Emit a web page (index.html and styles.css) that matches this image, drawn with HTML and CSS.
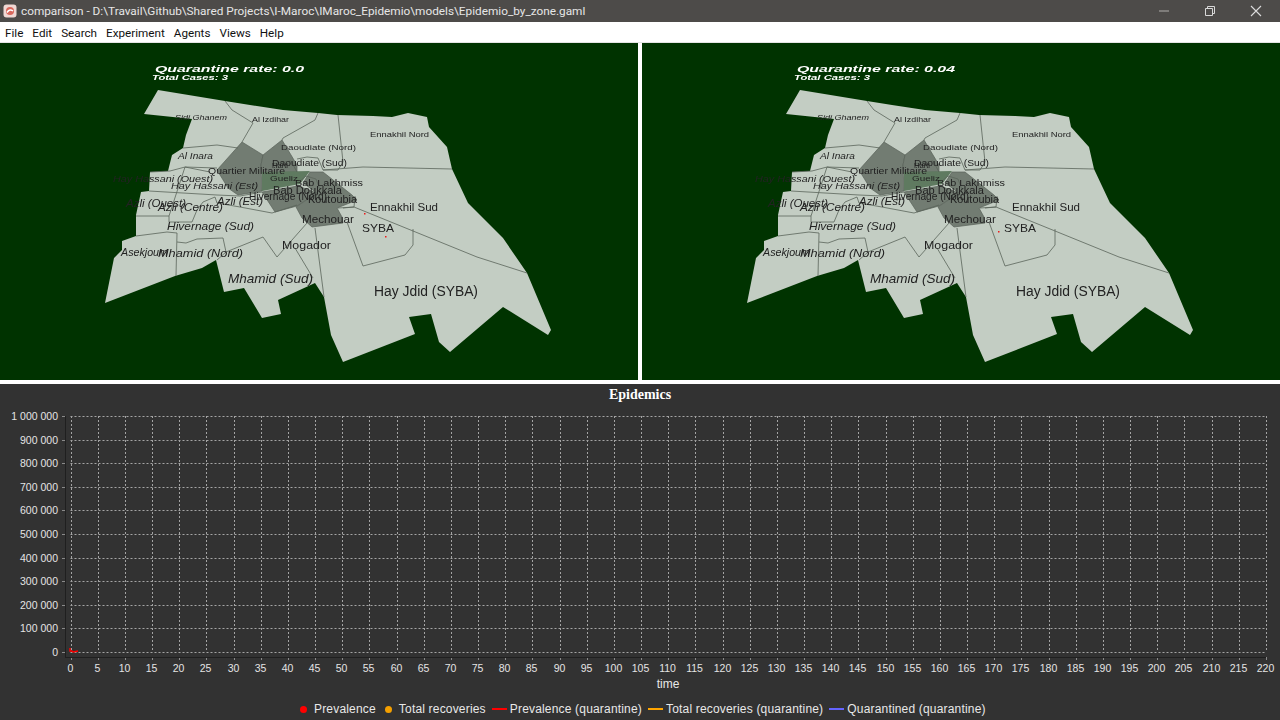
FILE: index.html
```html
<!DOCTYPE html>
<html lang="en">
<head>
    <meta charset="UTF-8">
    <title>comparison - Epidemio_by_zone.gaml</title>
    <link rel="stylesheet" href="styles.css">
</head>
<body>
    <div class="titlebar">
        <svg class="app-icon" width="14" height="14" viewBox="0 0 14 14">
            <rect x="0.5" y="0.5" width="13" height="13" rx="3" fill="#f0d8d4"/>
            <circle cx="7" cy="7" r="4" fill="#d9675c"/>
            <path d="M4 8.5c2-3 4-3 6-1.500" stroke="#fff" stroke-width="1.500" fill="none"/>
        </svg>
        <span class="window-title">comparison - D:\Travail\Github\Shared Projects\I-Maroc\IMaroc_Epidemio\models\Epidemio_by_zone.gaml</span>
        <div class="window-buttons">
            <svg width="12" height="12" viewBox="0 0 12 12"><path d="M1 6h10" stroke="#8f8d8b" stroke-width="1.500"/></svg>
            <svg width="12" height="12" viewBox="0 0 12 12"><path d="M1.500 3.500h7v7h-7zM3.500 3V1.500h7v7H9" stroke="#d8d8d8" fill="none"/></svg>
            <svg width="12" height="12" viewBox="0 0 12 12"><path d="M1 1l10 10M11 1L1 11" stroke="#dcdcdc" stroke-width="1.100"/></svg>
        </div>
    </div>
    <nav class="menubar">
        <span>File</span>
        <span>Edit</span>
        <span>Search</span>
        <span>Experiment</span>
        <span>Agents</span>
        <span>Views</span>
        <span>Help</span>
    </nav>
    <div class="maps">
        <div class="map-panel" id="map-a"></div>
        <div class="map-panel" id="map-b"></div>
    </div>
    <div class="chart">
        <h2 class="chart-title">Epidemics</h2>
        <div id="plot"></div>
        <div class="legend">
            <div class="legend-item"><i class="dot dot-red"></i>Prevalence</div>
            <div class="legend-item"><i class="dot dot-orange"></i>Total recoveries</div>
            <div class="legend-item line-item"><i class="line line-red"></i>Prevalence (quarantine)</div>
            <div class="legend-item line-item"><i class="line line-orange"></i>Total recoveries (quarantine)</div>
            <div class="legend-item line-item"><i class="line line-blue"></i>Quarantined (quarantine)</div>
        </div>
    </div>
    <script src="script.js"></script>
</body>
</html>
```

FILE: styles.css
```css
html, body {
    margin: 0;
    height: 720px;
    overflow: hidden;
    background-color: #fff;
}
body {
    display: flex;
    flex-direction: column;
    font-family: "Liberation Sans", Arial, sans-serif;
}
.titlebar {
    height: 22px;
    display: flex;
    align-items: center;
    background-color: #4d4b49;
    color: #e6e6e6;
    font-family: Roboto, sans-serif;
    font-size: 11.800px;
}
.app-icon {
    margin: 0 4px 0 3px;
}
.window-buttons {
    margin-left: auto;
    display: flex;
    gap: 34px;
    padding-right: 18px;
}
.menubar {
    box-sizing: border-box;
    height: 21px;
    display: flex;
    align-items: center;
    gap: 9px;
    padding: 2px 0 0 5px;
    background-color: #fff;
    border-bottom: 1px solid #e4e4e4;
    color: #111;
    font-family: Roboto, sans-serif;
    font-size: 11.700px;
}
.maps {
    height: 337px;
    display: flex;
    gap: 4px;
    margin-bottom: 4px;
}
.map-panel {
    width: 638px;
    overflow: hidden;
    background-color: #003300;
}
.map-panel svg {
    filter: blur(0.35px);
}
.map-panel svg, #plot svg {
    display: block;
}
.zone {
    fill: #c3cdc3;
}
.zone-dark {
    fill: #727c72;
    stroke: #596259;
    stroke-width: 0.7;
}
.zone-green {
    fill: #5f7a60;
}
.border {
    fill: none;
    stroke: #5b645b;
    stroke-width: 0.8;
}
.label {
    fill: #222;
}
.label-italic {
    font-style: italic;
}
.heading {
    fill: #fff;
    font-weight: bold;
    font-style: italic;
}
.case {
    fill: #f01818;
}
.chart {
    flex: 1;
    display: flex;
    flex-direction: column;
    background-color: #323232;
    color: #e8e8e8;
}
.chart-title {
    margin: 0;
    height: 19px;
    line-height: 22px;
    text-align: center;
    color: #fff;
    font-family: "Liberation Serif", serif;
    font-size: 14px;
    font-weight: bold;
}
.grid {
    stroke: #a4a4a4;
    stroke-width: 1;
    stroke-dasharray: 2 2;
}
.axis {
    stroke: #1f1f1f;
    stroke-width: 1;
}
.tick {
    stroke: #8a8a8a;
    stroke-width: 1;
}
.tick-label {
    fill: #e4e4e4;
    font-size: 10.500px;
}
.axis-label {
    fill: #e8e8e8;
    font-size: 12px;
}
.trace {
    stroke: #f00;
    stroke-width: 1.500;
    fill: none;
}
.legend {
    flex: 1;
    display: flex;
    align-items: center;
    gap: 9px;
    padding-left: 300px;
    font-size: 12px;
    letter-spacing: 0.18px;
}
.legend-item {
    display: flex;
    align-items: center;
    gap: 7px;
}
.line-item {
    gap: 3px;
    margin-left: -3px;
}
.dot {
    width: 7px;
    height: 7px;
    border-radius: 50%;
}
.dot-red {
    background-color: #f00;
}
.dot-orange {
    background-color: #f5a000;
}
.line {
    width: 15px;
    height: 2px;
}
.line-red {
    background-color: #f00;
}
.line-orange {
    background-color: #ffa500;
}
.line-blue {
    background-color: #6464ff;
}
```

FILE: script.js
```js
const SVG_NS = 'http://www.w3.org/2000/svg';

const outline = '158,90 144,114 192,119 186,135 183,148 172,155 168,171 150,172 149,191 141,192 136,215 136,236 122,241 122,250 114,258 105,303 175,276 202,268 216,260 224,292 244,288 262,318 281,314 278,300 315,283 324,297 331,335 343,362 415,334 409,317 431,314 439,342 450,352 503,307 548,335 551,330 527,273 503,238 468,203 452,169 447,147 429,127 427,117 408,113 392,117 373,116 337,115 318,113 283,110 250,105 225,101';

const darkZones = [
    '242,142 263,155 261,165 262,191 238,195 228,188 217,170',
    '282,140 297,165 297,172 262,173 261,165 263,155',
    '262,192 298,186 317,193 297,206 275,212',
    '310,172 323,172 352,195 357,200 337,208 342,217 343,223 312,227 302,218 296,207 317,193 303,183'
];
const greenZone = '262,172 310,171 300,184 262,191';

const borders = [
    '225,101 232,110 253,123 242,142',
    '318,113 315,120 283,138 282,140',
    '183,148 217,145 238,148',
    '150,172 170,171 185,167 210,172',
    '185,167 217,168',
    '149,191 217,195 240,196 262,192',
    '215,197 217,203 240,207 272,213 297,205',
    '185,167 169,216 169,222 192,222 197,210 203,202 215,197',
    '136,216 169,216',
    '136,236 167,232 177,233 176,276',
    '177,242 186,243 197,239 223,238 226,252 217,260',
    '226,252 263,237 277,257 307,223',
    '295,248 313,278',
    '315,228 324,297',
    '338,115 343,162 338,170 323,170 318,158 307,157 297,159',
    '323,170 363,167 452,169',
    '354,207 477,257 527,273',
    '338,208 354,207',
    '347,222 363,266 405,255 413,245 413,229',
    '343,208 354,207 355,196',
    '300,181 306,176 316,179 320,190',
    '272,164 291,161 297,172'
];

// text, left, right, vertical centre, font size, italic
const labels = [
    ['Sidi Ghanem', 175, 227, 118, 6.5, 1],
    ['Al Izdihar', 252, 289, 119.5, 6.5, 0],
    ['Ennakhil Nord', 370, 429, 134, 7, 0],
    ['Daoudiate (Nord)', 281, 356, 147, 7.5, 0],
    ['Al Inara', 178, 213, 156, 8.5, 1],
    ['Daoudiate (Sud)', 272, 347, 163, 8.5, 0],
    ['Harti', 272, 288, 165, 7.5, 0],
    ['Quartier Militaire', 208, 285, 170.5, 9, 0],
    ['Hay Hassani (Ouest)', 113, 213, 179, 9, 1],
    ['Gueliz', 270, 298, 178, 8, 0],
    ['Bab Lakhmiss', 295, 363, 183, 9.5, 0],
    ['Hay Hassani (Est)', 171, 258, 186, 9.5, 1],
    ['Bab Doukkala', 273, 342, 190, 10, 0],
    ['Hivernage (Nord)', 249, 327, 196, 10.5, 0],
    ['Koutoubia', 308, 357, 199, 10, 0],
    ['Azli (Est)', 217, 263, 201, 10, 1],
    ['Azli (Ouest)', 126, 186, 203.5, 10, 1],
    ['Azli (Centre)', 158, 223, 207.5, 10.5, 1],
    ['Ennakhil Sud', 370, 438, 207.5, 10, 0],
    ['Mechouar', 302, 354, 219, 10.5, 0],
    ['Hivernage (Sud)', 167, 254, 226, 10.5, 1],
    ['SYBA', 362, 394, 228, 10.5, 0],
    ['Mogador', 282, 331, 245, 11.5, 0],
    ['Asekjoum', 121, 168, 252, 11.5, 1],
    ['Mhamid (Nord)', 158, 243, 252.5, 11.5, 1],
    ['Mhamid (Sud)', 228, 313, 278.5, 13, 1],
    ['Hay Jdid (SYBA)', 374, 478, 291, 14, 0]
];

const simulations = [
    { id: 'map-a', rate: '0.0', rateWidth: 149, cases: [[385, 236], [364, 213]] },
    { id: 'map-b', rate: '0.04', rateWidth: 158, cases: [[356, 231]] }
];

function el(name, attrs, text) {
    const node = document.createElementNS(SVG_NS, name);
    for (const key in attrs) {
        node.setAttribute(key, attrs[key]);
    }
    if (text !== undefined) {
        node.textContent = text;
    }
    return node;
}

function fittedText(svg, text, left, right, centre, size, cls) {
    svg.appendChild(el('text', {
        x: left,
        y: centre + size * 0.36,
        'font-size': size,
        textLength: right - left,
        lengthAdjust: 'spacingAndGlyphs',
        class: cls
    }, text));
}

function drawMap(sim) {
    const svg = el('svg', { width: 638, height: 337, viewBox: '0 43 638 337' });
    svg.appendChild(el('polygon', { points: outline, class: 'zone' }));
    darkZones.forEach(points => svg.appendChild(el('polygon', { points, class: 'zone-dark' })));
    svg.appendChild(el('polygon', { points: greenZone, class: 'zone-green' }));
    borders.forEach(points => svg.appendChild(el('polyline', { points, class: 'border' })));
    labels.forEach(l => {
        fittedText(svg, l[0], l[1], l[2], l[3], l[4], l[5] ? 'label label-italic' : 'label');
    });
    sim.cases.forEach(c => {
        svg.appendChild(el('rect', { x: c[0], y: c[1], width: 1.5, height: 1.5, class: 'case' }));
    });
    fittedText(svg, 'Quarantine rate: ' + sim.rate, 155, 155 + sim.rateWidth, 69, 8.5, 'heading');
    fittedText(svg, 'Total Cases: 3', 152, 228, 77.5, 7, 'heading');
    document.getElementById(sim.id).appendChild(svg);
}

function drawPlot() {
    const svg = el('svg', { width: 1280, height: 295, viewBox: '0 403 1280 295' });
    const x0 = 70.5, xStep = 27.17, yTop = 416, yStep = 23.6;

    for (let i = 0; i <= 10; i++) {
        const y = Math.round(yTop + i * yStep) + 0.5;
        svg.appendChild(el('line', { x1: x0, x2: 1266, y1: y, y2: y, class: 'grid' }));
        svg.appendChild(el('line', { x1: 62, x2: 65, y1: y, y2: y, class: 'tick' }));
        const value = (10 - i) * 100000;
        const text = value === 0 ? '0' : value.toLocaleString('en-US').replace(/,/g, ' ');
        svg.appendChild(el('text', { x: 58, y: y + 3.5, 'text-anchor': 'end', class: 'tick-label' }, text));
    }
    for (let i = 0; i <= 44; i++) {
        const x = Math.round(x0 + i * xStep) + 0.5;
        svg.appendChild(el('line', { x1: x, x2: x, y1: 416, y2: 652, class: 'grid' }));
        svg.appendChild(el('line', { x1: x, x2: x, y1: 657, y2: 660, class: 'tick' }));
        svg.appendChild(el('text', { x: x - 1, y: 672, 'text-anchor': 'middle', class: 'tick-label' }, i * 5));
    }
    svg.appendChild(el('line', { x1: 65.5, x2: 65.5, y1: 416, y2: 657, class: 'axis' }));
    svg.appendChild(el('line', { x1: 65, x2: 1266, y1: 657.5, y2: 657.5, class: 'axis' }));
    svg.appendChild(el('polyline', { points: '70,648 70,651 72,651 73,652 78,651', class: 'trace' }));
    svg.appendChild(el('text', { x: 668, y: 688, 'text-anchor': 'middle', class: 'axis-label' }, 'time'));
    document.getElementById('plot').appendChild(svg);
}

simulations.forEach(drawMap);
drawPlot();
```
